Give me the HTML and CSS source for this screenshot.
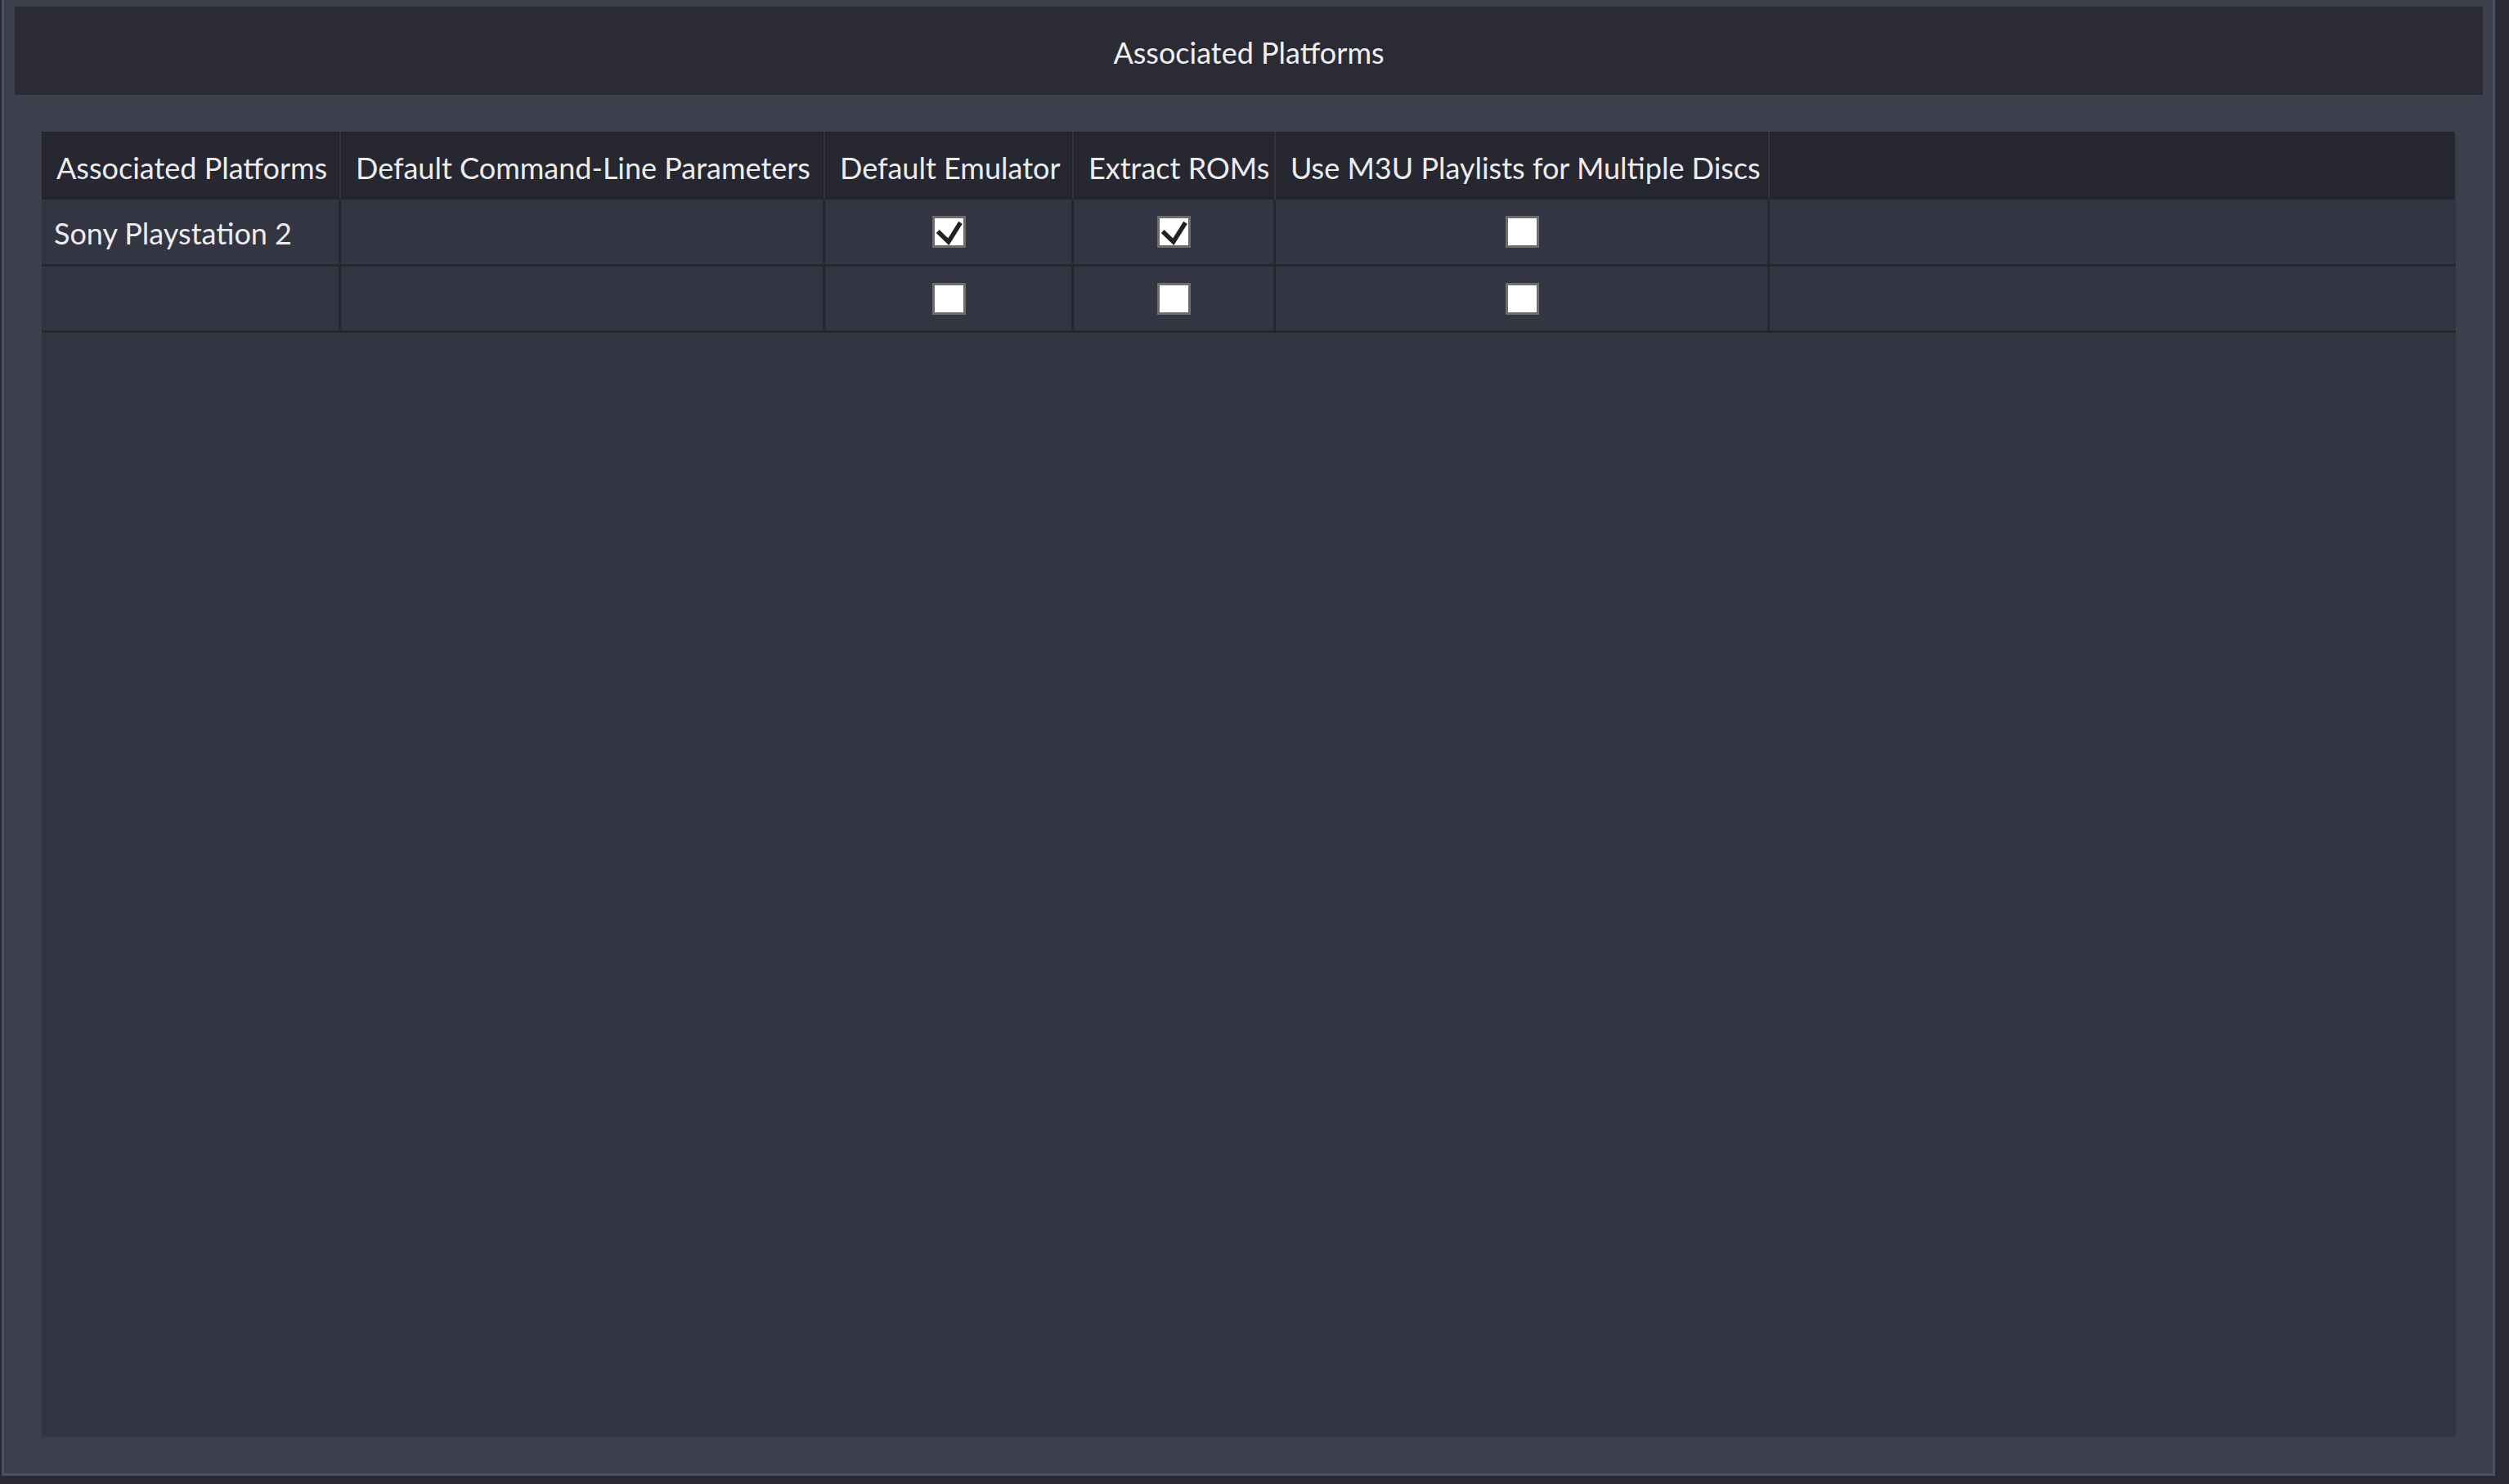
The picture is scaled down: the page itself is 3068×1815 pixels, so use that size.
FILE: index.html
```html
<!DOCTYPE html>
<html lang="en">
<head>
<meta charset="utf-8">
<title>Associated Platforms</title>
<link rel="stylesheet" href="styles.css">
</head>
<body>
<div class="window">
  <div class="title-bar">Associated Platforms</div>
  <div class="grid">
    <div class="grid-row grid-head">
      <div class="hcell">Associated Platforms</div>
      <div class="hcell">Default Command-Line Parameters</div>
      <div class="hcell">Default Emulator</div>
      <div class="hcell">Extract ROMs</div>
      <div class="hcell">Use M3U Playlists for Multiple Discs</div>
      <div class="hcell filler"></div>
    </div>
    <div class="grid-row">
      <div class="cell text">Sony Playstation 2</div>
      <div class="cell"></div>
      <div class="cell center"><span class="check"><svg viewBox="0 0 35 33" width="35" height="33"><path d="M3.7 16 L16.8 28.7 L31.5 5.3"/></svg></span></div>
      <div class="cell center"><span class="check"><svg viewBox="0 0 35 33" width="35" height="33"><path d="M3.7 16 L16.8 28.7 L31.5 5.3"/></svg></span></div>
      <div class="cell center"><span class="check"></span></div>
      <div class="cell filler"></div>
    </div>
    <div class="grid-row last">
      <div class="cell text"></div>
      <div class="cell"></div>
      <div class="cell center"><span class="check"></span></div>
      <div class="cell center"><span class="check"></span></div>
      <div class="cell center"><span class="check"></span></div>
      <div class="cell filler"></div>
    </div>
  </div>
</div>
</body>
</html>
```
FILE: styles.css
```css
html, body {
  margin: 0;
  padding: 0;
}
body {
  background: #2a2a35;
  font-family: Lato, "Open Sans", "Liberation Sans", sans-serif;
  overflow: hidden;
  width: 3068px;
  height: 1815px;
}
.window {
  box-sizing: border-box;
  margin-left: 2px;
  width: 3049px;
  height: 1805px;
  background: #3e3f4d;
  border: 3px solid #4e4f66;
  border-top: 0;
  padding: 8px 12px 45px 13px;
  display: flex;
  flex-direction: column;
}
.title-bar {
  box-sizing: border-box;
  height: 108px;
  flex: none;
  background: #2b2b36;
  color: #f0f0f2;
  font-size: 36px;
  padding-top: 4px;
  display: flex;
  align-items: center;
  justify-content: center;
}
.grid {
  margin: 45px 33px 0;
  flex: 1;
  background: #333542;
  display: flex;
  flex-direction: column;
}
.grid-row {
  display: grid;
  grid-template-columns: 366px 592px 304px 247px 604px 1fr;
  height: 82px;
  flex: none;
}
.grid-row.last {
  height: 81px;
}
.grid-head {
  height: 83px;
  background: #343542;
}
.hcell {
  box-sizing: border-box;
  background: #272731;
  border: 1px solid #23232c;
  border-bottom: 3px solid #24242d;
  margin-right: 2px;
  color: #ececee;
  font-size: 36px;
  padding: 6px 16px 0 17px;
  display: flex;
  align-items: center;
  white-space: nowrap;
}
.cell {
  box-sizing: border-box;
  border-right: 3px solid #27272f;
  border-bottom: 3px solid #27272f;
  display: flex;
  align-items: center;
  color: #ececee;
  font-size: 36px;
}
.cell.text {
  padding: 2px 15px 0;
  white-space: nowrap;
}
.cell.center {
  justify-content: center;
}
.cell.filler {
  border-right: 0;
}
.check {
  box-sizing: border-box;
  width: 41px;
  height: 39px;
  border: 3px solid #6d6d6d;
  background: #ffffff;
  display: block;
  margin-left: 1px;
}
.check svg {
  display: block;
}
.check path {
  fill: none;
  stroke: #222222;
  stroke-width: 5.5;
  stroke-linejoin: miter;
}
```
